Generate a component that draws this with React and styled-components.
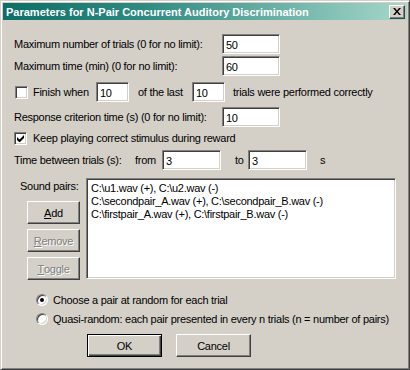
import React from 'react'
import styled, { createGlobalStyle } from 'styled-components'

const Global = createGlobalStyle`
    html, body { margin: 0; padding: 0; background: #d4d0c8; }
    body {
        font-family: "Liberation Sans", Arial, sans-serif;
        font-size: 11px;
        letter-spacing: -0.27px;
        color: #000;
    }
`

const pairs = [
    'C:\\u1.wav (+), C:\\u2.wav (-)',
    'C:\\secondpair_A.wav (+), C:\\secondpair_B.wav (-)',
    'C:\\firstpair_A.wav (+), C:\\firstpair_B.wav (-)',
]

export default function App() {
    return (
        <Window>
            <Global />
            <TitleBar>
                <Title>Parameters for N-Pair Concurrent Auditory Discrimination</Title>
                <CloseButton>
                    <svg width="8" height="7" viewBox="0 0 8 7">
                        <path d="M0 0h2l2 2.5L6 0h2L5 3.5 8 7H6L4 4.5 2 7H0l3-3.5z" fill="#000" />
                    </svg>
                </CloseButton>
            </TitleBar>
            <Body>
                <Row $top={14}>
                    <Label $w={208}>Maximum number of trials (0 for no limit):</Label>
                    <TextBox $w={58}>50</TextBox>
                </Row>
                <Row $top={2}>
                    <Label $w={208}>Maximum time (min) (0 for no limit):</Label>
                    <TextBox $w={58}>60</TextBox>
                </Row>
                <Row $top={6}>
                    <CheckBox />
                    <Label $w={68} $pad={5}>Finish when</Label>
                    <TextBox $w={33}>10</TextBox>
                    <Label $w={63} $pad={9}>of the last</Label>
                    <TextBox $w={33}>10</TextBox>
                    <Label $pad={8}>trials were performed correctly</Label>
                </Row>
                <Row $top={5}>
                    <Label $w={208}>Response criterion time (s) (0 for no limit):</Label>
                    <TextBox $w={58}>10</TextBox>
                </Row>
                <Row $top={1}>
                    <CheckBox $flush>
                        <svg width="7" height="7" viewBox="0 0 7 7">
                            <path d="M0 2v3l2 2h1l4-4V0L2.5 4.5z" fill="#000" />
                        </svg>
                    </CheckBox>
                    <Label $pad={5}>Keep playing correct stimulus during reward</Label>
                </Row>
                <Row $top={2}>
                    <Label $w={121}>Time between trials (s):</Label>
                    <Label $w={27}>from</Label>
                    <TextBox $w={59}>3</TextBox>
                    <Label $w={27} $pad={14}>to</Label>
                    <TextBox $w={59}>3</TextBox>
                    <Label $pad={13}>s</Label>
                </Row>
                <Pairs>
                    <SideColumn>
                        <PairsLabel>Sound pairs:</PairsLabel>
                        <SideButtons>
                            <Button><u>A</u>dd</Button>
                            <Button $disabled><u>R</u>emove</Button>
                            <Button $disabled><u>T</u>oggle</Button>
                        </SideButtons>
                    </SideColumn>
                    <ListBox>
                        {pairs.map((p) => (
                            <ListItem key={p}>{p}</ListItem>
                        ))}
                    </ListBox>
                </Pairs>
                <Radios>
                    <RadioRow>
                        <Radio $checked />
                        <span>Choose a pair at random for each trial</span>
                    </RadioRow>
                    <RadioRow>
                        <Radio />
                        <span>Quasi-random: each pair presented in every n trials (n = number of pairs)</span>
                    </RadioRow>
                </Radios>
                <Footer>
                    <Button $default $w={75}>OK</Button>
                    <Button $w={75}>Cancel</Button>
                </Footer>
            </Body>
        </Window>
    )
}

const Window = styled.div`
    width: 410px;
    height: 370px;
    box-sizing: border-box;
    background: #d4d0c8;
    border-top: 1px solid #d4d0c8;
    border-left: 1px solid #d4d0c8;
    border-right: 1px solid #404040;
    border-bottom: 1px solid #404040;
    box-shadow: inset 1px 1px #fff, inset -1px -1px #808080;
    padding: 2px;
    display: flex;
    flex-direction: column;
`

const TitleBar = styled.div`
    height: 17px;
    flex: none;
    display: flex;
    align-items: center;
    justify-content: space-between;
    padding: 0 2px 0 3px;
    background: linear-gradient(90deg, #0c6e67 0%, #2f8b82 35%, #a6d7ca 100%);
`

const Title = styled.div`
    color: #fff;
    font-weight: bold;
    font-size: 11px;
    letter-spacing: 0;
`

const CloseButton = styled.div`
    width: 16px;
    height: 14px;
    box-sizing: border-box;
    background: #d4d0c8;
    border-top: 1px solid #fff;
    border-left: 1px solid #fff;
    border-right: 1px solid #404040;
    border-bottom: 1px solid #404040;
    box-shadow: inset -1px -1px #808080;
    display: flex;
    align-items: center;
    justify-content: center;
`

const Body = styled.div`
    display: flex;
    flex-direction: column;
    padding: 0 11px;
`

const Row = styled.div`
    display: flex;
    align-items: center;
    height: 20px;
    margin-top: ${(p) => p.$top || 0}px;
`

const Label = styled.span`
    white-space: nowrap;
    padding-left: ${(p) => p.$pad || 0}px;
    ${(p) => (p.$w ? `width: ${p.$w}px; flex: none;` : '')}
    box-sizing: border-box;
`

const TextBox = styled.div`
    width: ${(p) => p.$w}px;
    height: 20px;
    flex: none;
    box-sizing: border-box;
    background: #fff;
    border-top: 1px solid #808080;
    border-left: 1px solid #808080;
    border-right: 1px solid #fff;
    border-bottom: 1px solid #fff;
    box-shadow: inset 1px 1px #404040, inset -1px -1px #d4d0c8;
    padding: 3px 3px 0;
    line-height: 14px;
`

const CheckBox = styled.div`
    width: 13px;
    height: 13px;
    flex: none;
    box-sizing: border-box;
    background: #fff;
    border-top: 1px solid #808080;
    border-left: 1px solid #808080;
    border-right: 1px solid #fff;
    border-bottom: 1px solid #fff;
    box-shadow: inset 1px 1px #404040, inset -1px -1px #d4d0c8;
    display: flex;
    align-items: center;
    justify-content: center;
    margin-left: ${(p) => (p.$flush ? 0 : 1)}px;
    margin-right: ${(p) => (p.$flush ? 1 : 0)}px;
`

const Pairs = styled.div`
    display: flex;
    margin-top: 8px;
`

const SideColumn = styled.div`
    width: 72px;
    flex: none;
    display: flex;
    flex-direction: column;
    padding-left: 6px;
    gap: 5px;
    box-sizing: border-box;
`

const SideButtons = styled.div`
    display: flex;
    flex-direction: column;
    gap: 5px;
    padding-left: 7px;
`

const PairsLabel = styled.div`
    height: 18px;
    line-height: 17px;
`

const Button = styled.div`
    width: ${(p) => p.$w || 53}px;
    height: 23px;
    box-sizing: border-box;
    display: flex;
    align-items: center;
    justify-content: center;
    background: #d4d0c8;
    color: ${(p) => (p.$disabled ? '#808080' : '#000')};
    text-shadow: ${(p) => (p.$disabled ? '1px 1px #fff' : 'none')};
    border-top: 1px solid ${(p) => (p.$default ? '#000' : '#fff')};
    border-left: 1px solid ${(p) => (p.$default ? '#000' : '#fff')};
    border-right: 1px solid ${(p) => (p.$default ? '#000' : '#404040')};
    border-bottom: 1px solid ${(p) => (p.$default ? '#000' : '#404040')};
    box-shadow: ${(p) =>
        p.$default
            ? 'inset 1px 1px #fff, inset -1px -1px #404040, inset -2px -2px #808080'
            : 'inset -1px -1px #808080'};
    u { text-decoration: underline; }
`

const ListBox = styled.div`
    width: 310px;
    height: 101px;
    box-sizing: border-box;
    background: #fff;
    border-top: 1px solid #808080;
    border-left: 1px solid #808080;
    border-right: 1px solid #fff;
    border-bottom: 1px solid #fff;
    box-shadow: inset 1px 1px #404040, inset -1px -1px #d4d0c8;
    padding: 3px 4px;
`

const ListItem = styled.div`
    height: 13px;
    line-height: 13px;
    white-space: nowrap;
`

const Radios = styled.div`
    display: flex;
    flex-direction: column;
    gap: 6px;
    margin-top: 13px;
    padding-left: 22px;
`

const RadioRow = styled.div`
    display: flex;
    align-items: center;
    gap: 5px;
    height: 13px;
    white-space: nowrap;
`

const Radio = styled.div`
    width: 12px;
    height: 12px;
    flex: none;
    box-sizing: border-box;
    border-radius: 50%;
    background: #fff;
    border: 1px solid;
    border-color: #808080 #fff #fff #808080;
    box-shadow: inset 1px 1px #404040, inset -1px -1px #d4d0c8;
    display: flex;
    align-items: center;
    justify-content: center;
    &::after {
        content: '';
        width: 4px;
        height: 4px;
        border-radius: 50%;
        background: ${(p) => (p.$checked ? '#000' : 'transparent')};
    }
`

const Footer = styled.div`
    display: flex;
    gap: 14px;
    padding-left: 73px;
    margin-top: 9px;
`
